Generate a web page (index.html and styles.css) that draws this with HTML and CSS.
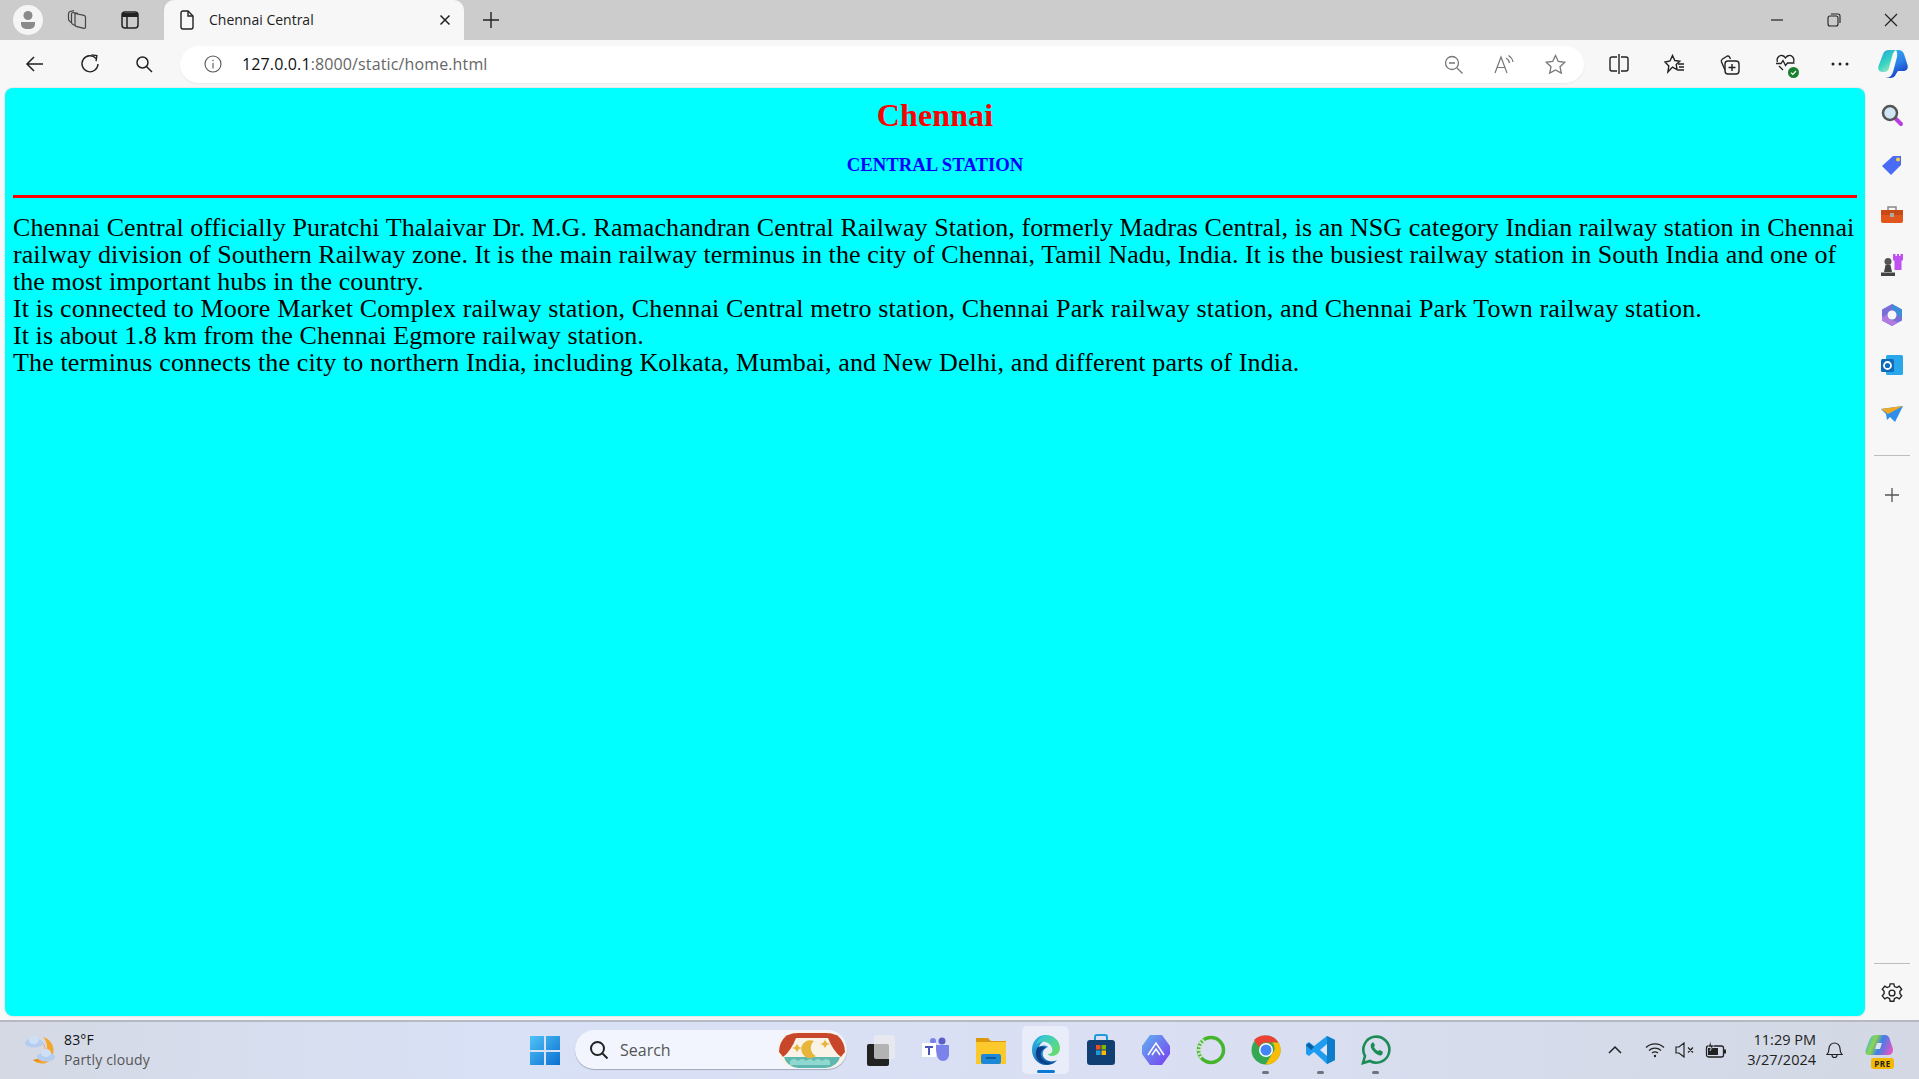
FILE: index.html
```html
<!DOCTYPE html>
<html lang="en">
<head>
<meta charset="utf-8">
<title>Chennai Central</title>
<link rel="stylesheet" href="styles.css">
</head>
<body>
<div class="screen">
  <div class="tabstrip">
    <div class="strip-left">
      <div class="avatar"><svg width="24" height="24" viewBox="0 0 24 24"><circle cx="12" cy="7.500" r="4.500" fill="#8a8a8a"/><path d="M5 14h14v2a5 5 0 0 1-5 5h-4a5 5 0 0 1-5-5z" fill="#8a8a8a"/></svg></div>
      <div class="strip-icon"><svg width="22" height="22" viewBox="0 0 22 22" fill="none" stroke="#444" stroke-width="1.200"><path d="M9 4.500l9 1.800q1.500.4 1.500 2v9.700q0 1.500-1.500 1.300l-7-1.600q-2-.5-2-2z"/><path d="M9 16.500l-2-1q-1.500-.6-1.500-2V5q0-1.500 1.500-1.500l5 .8"/><path d="M5.500 13.500l-1.500-1Q2.500 11.500 2.500 10V5Q2.500 3 4 2.500l4-.8"/></svg></div>
      <div class="strip-icon strip-icon-last"><svg width="18" height="18" viewBox="0 0 18 18" fill="none" stroke="#222" stroke-width="1.500"><rect x="1" y="1" width="16" height="16" rx="3"/><path d="M1 4h16" stroke-width="4"/><path d="M6 5v12"/></svg></div>
    </div>
    <div class="tab">
      <svg width="16" height="20" viewBox="0 0 16 20" fill="none" stroke="#222" stroke-width="1.400"><path d="M2 3a2 2 0 0 1 2-2h5l5 5v11a2 2 0 0 1-2 2H4a2 2 0 0 1-2-2z"/><path d="M9 1v5h5"/></svg>
      <span class="tab-title">Chennai Central</span>
      <svg class="tab-close" width="12" height="12" viewBox="0 0 12 12" stroke="#222" stroke-width="1.500"><path d="M1.500 1.500l9 9M10.500 1.500l-9 9"/></svg>
    </div>
    <svg class="new-tab" width="18" height="18" viewBox="0 0 18 18" stroke="#222" stroke-width="1.400"><path d="M9 1v16M1 9h16"/></svg>
    <div class="win-controls">
      <svg width="14" height="14" viewBox="0 0 14 14" stroke="#222" stroke-width="1.200"><path d="M1 7h12"/></svg>
      <svg width="14" height="14" viewBox="0 0 14 14" fill="none" stroke="#222" stroke-width="1.100"><rect x="1" y="3" width="10" height="10" rx="2"/><path d="M4 1h7a2 2 0 0 1 2 2v7"/></svg>
      <svg width="14" height="14" viewBox="0 0 14 14" stroke="#222" stroke-width="1.200"><path d="M1 1l12 12M13 1L1 13"/></svg>
    </div>
  </div>

  <div class="toolbar">
    <div class="nav">
      <svg width="20" height="20" viewBox="0 0 20 20" fill="none" stroke="#222" stroke-width="1.500"><path d="M18 10H2M9 3l-7 7 7 7"/></svg>
      <svg width="20" height="20" viewBox="0 0 20 20" fill="none" stroke="#222" stroke-width="1.400"><path d="M16 4.500A8 8 0 1 0 18 10"/><path d="M11 1.500h5.500V7" transform="rotate(8 16 4)"/></svg>
      <svg width="18" height="18" viewBox="0 0 18 18" fill="none" stroke="#222" stroke-width="1.500"><circle cx="7.500" cy="7.500" r="5.500"/><path d="M11.500 11.500l5.500 5.500"/></svg>
    </div>
    <div class="address">
      <svg width="18" height="18" viewBox="0 0 18 18" fill="none" stroke="#555" stroke-width="1.100"><circle cx="9" cy="9" r="8"/><path d="M9 8v5.500M9 4.700v1.500"/></svg>
      <span class="url"><span class="url-host">127.0.0.1</span>:8000/static/home.html</span>
      <div class="addr-actions">
        <svg width="19" height="19" viewBox="0 0 19 19" fill="none" stroke="#777" stroke-width="1.300"><circle cx="8" cy="8" r="6.500"/><path d="M5 8h6M13 13l5.500 5.500"/></svg>
        <svg width="20" height="20" viewBox="0 0 20 20" fill="none" stroke="#777" stroke-width="1.200"><path d="M1 19L7 3l6 16M3.500 13.500h7"/><path d="M12 4c2 1 3 3 3.500 5M14.500 1.500c2.500 1.500 4 4 4.500 6.500"/></svg>
        <svg width="21" height="20" viewBox="0 0 21 20" fill="none" stroke="#777" stroke-width="1.300"><path d="M10.500 1.500l2.800 6 6.500.8-4.800 4.400 1.300 6.400-5.800-3.200-5.800 3.200 1.300-6.400L1.200 8.300l6.500-.8z"/></svg>
      </div>
    </div>
    <div class="tools">
      <svg width="20" height="20" viewBox="0 0 20 20" fill="none" stroke="#222" stroke-width="1.400"><path d="M8 3H3a2 2 0 0 0-2 2v10a2 2 0 0 0 2 2h5M12 3h5a2 2 0 0 1 2 2v10a2 2 0 0 1-2 2h-5M10 0v20"/></svg>
      <svg width="21" height="20" viewBox="0 0 21 20" fill="none" stroke="#222" stroke-width="1.400"><path d="M8.500 1.500l2.300 5 5 .7-3.600 3.400.9 5-4.600-2.500L3.900 18l.9-6L1 8l5-1z"/><path d="M14 10h6M15 13h5M14 16h6"/></svg>
      <svg width="21" height="21" viewBox="0 0 21 21" fill="none" stroke="#222" stroke-width="1.400"><path d="M6 16L2.500 8a2.500 2.500 0 0 1 1-3l4-2.500a2 2 0 0 1 3 .5l1 2"/><rect x="6" y="7" width="14" height="13" rx="3"/><path d="M13 10v7M9.500 13.500h7"/></svg>
      <span class="heart">
        <svg width="21" height="21" viewBox="0 0 21 21" fill="none" stroke="#222" stroke-width="1.300"><path d="M2.500 8C1 4.500 4 1 7 1.500c1.500.2 2.800 1.300 3.500 2.500.7-1.200 2-2.300 3.500-2.500 3-.5 6 3 4.500 6.500"/><path d="M1 9.500h5l2-3 2.500 5 2-2.500h7M4 12l4 4"/></svg>
        <svg class="heart-badge" width="11" height="11" viewBox="0 0 11 11"><circle cx="5.500" cy="5.500" r="5.500" fill="#1a7f2e"/><path d="M3 5.700l1.800 1.800L8 4" fill="none" stroke="#fff" stroke-width="1.200"/></svg>
      </span>
      <svg width="20" height="6" viewBox="0 0 20 6" fill="#222"><circle cx="3" cy="3" r="1.500"/><circle cx="10" cy="3" r="1.500"/><circle cx="17" cy="3" r="1.500"/></svg>
      <svg class="copilot" width="30" height="28" viewBox="0 0 30 28"><defs><linearGradient id="cpa" x1="0" y1="0" x2=".6" y2="1"><stop offset="0" stop-color="#1f9fe0"/><stop offset=".6" stop-color="#37d3c0"/><stop offset="1" stop-color="#9be8c8"/></linearGradient><linearGradient id="cpb" x1="0" y1="0" x2=".4" y2="1"><stop offset="0" stop-color="#35b4ea"/><stop offset=".6" stop-color="#2a7fe8"/><stop offset="1" stop-color="#1a3fc8"/></linearGradient></defs><path d="M11 0h7c-2 1-3 3-3.500 5L11 18c-.6 3-3 4-5 4H4c-3 0-4.500-3-3.500-6L5 4c1-2.500 3-4 6-4z" fill="url(#cpa)"/><path d="M18 0h2c3 0 5 1.500 6 4l3.500 11c1 3-.5 6-3.500 6h-6l-2 3c-1 2.500-3 4-6 4H7c5 0 7-3 8-6l4-15c.5-2.500 0-6-1-7z" fill="url(#cpb)"/></svg>
    </div>
  </div>

  <div class="browser-body">
    <main class="page">
      <h1 class="title">Chennai</h1>
      <h3 class="subtitle">CENTRAL STATION</h3>
      <hr class="rule">
      <p class="article">Chennai Central officially Puratchi Thalaivar Dr. M.G. Ramachandran Central Railway Station, formerly Madras Central, is an NSG category Indian railway station in Chennai railway division of Southern Railway zone. It is the main railway terminus in the city of Chennai, Tamil Nadu, India. It is the busiest railway station in South India and one of the most important hubs in the country.<br><span class="wide">It is connected to Moore Market Complex railway station, Chennai Central metro station, Chennai Park railway station, and Chennai Park Town railway station.</span><br>It is about 1.8 km from the Chennai Egmore railway station.<br><span class="wide">The terminus connects the city to northern India, including Kolkata, Mumbai, and New Delhi, and different parts of India.</span></p>
    </main>
    <aside class="sidebar">
      <svg width="24" height="24" viewBox="0 0 24 24"><path d="M14 14l7 7" stroke="#b93ee0" stroke-width="4" stroke-linecap="round"/><circle cx="10" cy="10" r="7" fill="#cfe6f5" stroke="#555" stroke-width="2.500"/></svg>
      <svg width="24" height="24" viewBox="0 0 24 24"><path d="M2 13L13 3h8v9L11 22z" fill="#4a6cf5"/><circle cx="18" cy="6.500" r="2" fill="#f4d03f"/></svg>
      <svg width="24" height="24" viewBox="0 0 24 24"><path d="M8 7V4h8v3" fill="none" stroke="#888" stroke-width="1.500"/><rect x="1" y="7" width="22" height="13" rx="2" fill="#e0561c"/><rect x="1" y="7" width="22" height="5" fill="#c84a12"/><rect x="10" y="10" width="4" height="4" fill="#aaa"/></svg>
      <svg width="24" height="24" viewBox="0 0 24 24"><path d="M13 1h2.500v2H17V1h2v2h1.500V1H23v6l-1.500 1v9h-7V8L13 7z" fill="#c050f0"/><circle cx="8" cy="8.500" r="3.500" fill="#555"/><path d="M5.500 12h5l1.500 7H4zM1 19.500h14V23H1z" fill="#444"/></svg>
      <svg width="24" height="24" viewBox="0 0 24 24"><path d="M12 1l10 5.500v11L12 23 2 17.500v-11z" fill="#7a6fd8"/><path d="M12 1l10 5.500v8L17 12a5 5 0 0 0-5-5z" fill="#3a8fd8"/><path d="M2 14l5-2a5 5 0 0 0 5 5l6 2.500L12 23 2 17.500z" fill="#b07ae0"/><circle cx="12" cy="12" r="4.500" fill="#f7f7f7"/></svg>
      <svg width="24" height="24" viewBox="0 0 24 24"><rect x="6" y="2" width="17" height="20" rx="1.500" fill="#28a8ea"/><rect x="1" y="6" width="13" height="13" rx="1.500" fill="#0f6cbd"/><circle cx="7.500" cy="12.500" r="3.500" fill="none" stroke="#fff" stroke-width="1.800"/></svg>
      <svg width="24" height="24" viewBox="0 0 24 24"><path d="M1 6l22-3-8 16-5-5-3 3-1-6z" fill="#2f8fe8"/><path d="M1 6l22-3-15 8z" fill="#f0a820"/></svg>
      <div class="side-sep"></div>
      <svg class="side-add" width="16" height="16" viewBox="0 0 16 16" stroke="#555" stroke-width="1.300"><path d="M8 1v14M1 8h14"/></svg>
      <div class="side-spacer"></div>
      <div class="side-sep side-sep-end"></div>
      <svg class="side-gear" width="22" height="22" viewBox="0 0 24 24" fill="none" stroke="#222" stroke-width="1.500"><circle cx="12" cy="12" r="3.200"/><path d="M10 2h4l.7 3 2.600 1.100 2.600-1.600 2.700 3.400-2 2.200v2.800l2 2.200-2.700 3.400-2.600-1.600-2.600 1.100-.7 3h-4l-.7-3-2.600-1.100-2.600 1.600-2.700-3.400 2-2.200v-2.800l-2-2.200 2.700-3.400 2.600 1.600L9.300 5z"/></svg>
    </aside>
  </div>

  <footer class="taskbar">
    <div class="weather">
      <svg width="36" height="34" viewBox="0 0 36 34"><path d="M20 4a14 14 0 0 1 3 26 14 14 0 0 1-13-3c8 1 15-5 14-13 0-4-2-8-4-10z" fill="#f4a62a"/><path d="M16 7c6 4 8 11 4 17l-10 3c6 4 13 0 13-8 0-5-3-11-7-12z" fill="#f08a1c"/><ellipse cx="11" cy="10" rx="9" ry="4.500" fill="#b5cdf0"/><ellipse cx="11" cy="7" rx="5" ry="4" fill="#cfdff5"/><ellipse cx="23" cy="24" rx="9" ry="4.500" fill="#b5cdf0"/><ellipse cx="23" cy="20" rx="5" ry="4" fill="#cfdff5"/></svg>
      <div class="weather-text"><span class="temp">83°F</span><span class="cond">Partly cloudy</span></div>
    </div>
    <div class="task-center">
      <svg class="tb-icon" width="30" height="30" viewBox="0 0 30 30"><defs><linearGradient id="win" x1="0" y1="0" x2="1" y2="1"><stop offset="0" stop-color="#4fc3f7"/><stop offset="1" stop-color="#0a6fd0"/></linearGradient></defs><path d="M0 1h14v14H0zM16 1h14v14H16zM0 17h14v13H0zM16 17h14v13H16z" fill="url(#win)"/></svg>
      <div class="search">
        <svg width="20" height="20" viewBox="0 0 20 20" fill="none" stroke="#222" stroke-width="2"><circle cx="8.500" cy="8.500" r="6.500"/><path d="M13 13l5.500 5.500"/></svg>
        <span class="search-text">Search</span>
        <svg class="search-art" width="68" height="36" viewBox="0 0 68 36"><rect width="68" height="36" rx="18" fill="#f8f3e6"/><path d="M10 3Q14 1 20 1h28q6 0 10 2v3H10z" fill="#c8472a"/><path d="M9 3Q1 10 1 20q2 2 4 5 8-6 13-19z" fill="#c8472a"/><path d="M59 3q8 7 8 17-2 2-4 5-8-6-13-19z" fill="#c8472a"/><path d="M6 25h56q-2 9-14 11H20Q8 34 6 25z" fill="#5fb8b0"/><path d="M12 29q4-4 8 0 4-4 8 0 4-4 8 0 4-4 8 0 4-4 8 0v4H12z" fill="#8fd8d0"/><path d="M36 9a9 9 0 1 0 2 15 9 9 0 0 1-2-15z" fill="#e8b53a"/><path d="M19 12l2 3 3 1-3 1-2 3-2-3-3-1 3-1zM47 8l2 3 3 1-3 1-2 3-2-3-3-1 3-1z" fill="#e8b53a"/></svg>
      </div>
      <span class="tb-slot"><svg width="30" height="34" viewBox="0 0 30 34"><rect x="1" y="11" width="22" height="22" rx="2" fill="#222"/><rect x="8" y="2" width="21" height="24" rx="2" fill="#ececec" fill-opacity=".72"/></svg></span>
      <span class="tb-slot"><svg width="30" height="30" viewBox="0 0 30 30"><circle cx="21" cy="6" r="3.500" fill="#5b5fc7"/><circle cx="12" cy="6" r="3" fill="#7b83eb"/><path d="M14 10h14v10a6 6 0 0 1-12 0z" fill="#7b83eb"/><rect x="1" y="8" width="14" height="14" fill="#fff"/><path d="M4 11h8v2H9v7H7v-7H4z" fill="#4b53bc"/></svg></span>
      <span class="tb-slot"><svg width="30" height="28" viewBox="0 0 30 28"><path d="M0 2h12l3 3h15v4H0z" fill="#d99a10"/><rect y="6" width="30" height="22" fill="#fbc92b"/><rect x="5" y="18" width="20" height="10" rx="2" fill="#1e88d8"/><path d="M10 22h10" stroke="#0f4f8a" stroke-width="1.500"/></svg></span>
      <span class="tb-slot tb-active"><svg width="30" height="32" viewBox="0 0 30 32"><defs><linearGradient id="edge" x1="0" y1="0" x2=".6" y2="1"><stop offset="0" stop-color="#35c1f1"/><stop offset="1" stop-color="#0c59a4"/></linearGradient><linearGradient id="edgeg" x1="0" y1="0" x2="1" y2="1"><stop offset="0" stop-color="#2cc4e8"/><stop offset="1" stop-color="#6ee05a"/></linearGradient></defs><path d="M15 1C7 1 1 7 1 16c0 8 6 15 14 15 5 0 9-2 11-5-5 3-12 1-14-4-1-4 1-8 5-9-2-2-6-2-9 0 2-6 8-8 12-7z" fill="url(#edge)"/><path d="M15 1c8 0 14 6 14 13 0 5-4 8-8 8-2 0-4-1-4-2 4 0 5-3 4-6-1-4-6-7-11-6-2 .5-4 2-5 3 2-6 6-10 10-10z" fill="url(#edgeg)"/><path d="M6 14c3-2 7-2 9 0-4 1-6 4-5 8 1 4 5 7 10 7-6 3-16-1-15-11z" fill="#0a3d8a"/></svg><span class="active-bar"></span></span>
      <span class="tb-slot"><svg width="30" height="32" viewBox="0 0 30 32"><path d="M9 7V3a2 2 0 0 1 2-2h8a2 2 0 0 1 2 2v4" fill="none" stroke="#1c9bd8" stroke-width="2"/><rect x="1" y="6" width="28" height="25" rx="3" fill="#123f73"/><rect x="10" y="11" width="4.500" height="4.500" fill="#f25022"/><rect x="15.500" y="11" width="4.500" height="4.500" fill="#7fba00"/><rect x="10" y="16.500" width="4.500" height="4.500" fill="#1c9bd8"/><rect x="15.500" y="16.500" width="4.500" height="4.500" fill="#ffb900"/></svg></span>
      <span class="tb-slot"><svg width="30" height="32" viewBox="0 0 30 32"><defs><linearGradient id="arc" x1="0" y1="0" x2="1" y2="1"><stop offset="0" stop-color="#5fb4f0"/><stop offset="1" stop-color="#7a3cf0"/></linearGradient></defs><path d="M9 1h12l8 11v8l-8 11H9L1 20v-8z" fill="url(#arc)"/><path d="M7 21l8-12 8 12M11 21l4-6 4 6" fill="none" stroke="#fff" stroke-width="1.500"/></svg></span>
      <span class="tb-slot"><svg width="30" height="30" viewBox="0 0 30 30" fill="none"><circle cx="15" cy="15" r="12.500" stroke="#46b52c" stroke-width="3.500"/><path d="M8 5a12.500 12.500 0 0 0-2 18" stroke="#c9e8c0" stroke-width="4" stroke-dasharray="2 1.500"/></svg></span>
      <span class="tb-slot"><svg width="30" height="30" viewBox="0 0 30 30"><circle cx="15" cy="15" r="14.500" fill="#34a853"/><path d="M15 .5a14.500 14.500 0 0 1 12.500 7H15a7.500 7.500 0 0 0-7 5L3 5A14.500 14.500 0 0 1 15 .5z" fill="#ea4335"/><path d="M27.500 7.500a14.500 14.500 0 0 1-13 22L21 19a7.500 7.500 0 0 0 0-11.500z" fill="#fbbc05"/><circle cx="15" cy="15" r="7" fill="#fff"/><circle cx="15" cy="15" r="5.500" fill="#4285f4"/></svg><span class="run-dot"></span></span>
      <span class="tb-slot"><svg width="30" height="30" viewBox="0 0 30 30"><path d="M21 1l8 4v20l-8 4-13-12-5 4-3-2v-10l3-2 5 4z" fill="#1f9cf0"/><path d="M21 9l-7 6 7 6z" fill="#e0e4f6"/><path d="M21 1l8 4v20l-8 4z" fill="#0d7cc9"/><path d="M0 10l3-2 5 4-3 3z" fill="#0a5fa0"/></svg><span class="run-dot"></span></span>
      <span class="tb-slot"><svg width="30" height="30" viewBox="0 0 30 30" fill="none"><path d="M2 28l2-7a13 13 0 1 1 5 5z" stroke="#1b8c55" stroke-width="2.600"/><path d="M10 9c-1 2 0 5 3 8s6 4 8 3l1-3-3-2-2 1c-2-1-3-2-4-4l1-2-2-3z" fill="#1b8c55"/></svg><span class="run-dot"></span></span>
    </div>
    <div class="tray">
      <svg width="14" height="9" viewBox="0 0 14 9" fill="none" stroke="#222" stroke-width="1.500"><path d="M1 8l6-6 6 6"/></svg>
      <div class="tray-status">
        <svg width="20" height="16" viewBox="0 0 20 16" fill="none" stroke="#222" stroke-width="1.300"><path d="M1 5.500a13 13 0 0 1 18 0M4 8.500a9 9 0 0 1 12 0M7 11a5 5 0 0 1 6 0"/><circle cx="10" cy="14" r="1.200" fill="#222" stroke="none"/></svg>
        <svg width="20" height="16" viewBox="0 0 20 16" fill="none" stroke="#222" stroke-width="1.200"><path d="M1 5h3l5-4v14l-5-4H1zM13 5.500l5 5M18 5.500l-5 5"/></svg>
        <svg width="22" height="18" viewBox="0 0 22 18"><rect x="1.500" y="5" width="17" height="11" rx="2" fill="none" stroke="#222" stroke-width="1.300"/><path d="M3 14V7h10v7z" fill="#222"/><rect x="19" y="8.500" width="2" height="4" fill="#222"/><path d="M6 0L3 6h3l-1 4 4-6H6z" fill="#222" stroke="#d5dae6" stroke-width=".6"/></svg>
      </div>
      <div class="clock"><span>11:29 PM</span><span>3/27/2024</span></div>
      <svg class="bell" width="17" height="19" viewBox="0 0 17 19" fill="none" stroke="#222" stroke-width="1.200"><path d="M1 14.500c1.500-1.500 2-3 2-6a5.500 5.500 0 0 1 11 0c0 3 .5 4.500 2 6zM6 15a2.500 2.500 0 0 0 5 0"/></svg>
      <span class="copilot-pre">
        <svg width="28" height="24" viewBox="0 0 28 24"><defs><linearGradient id="cpp" x1="0" y1=".3" x2="1" y2=".6"><stop offset="0" stop-color="#35b8e8"/><stop offset=".3" stop-color="#8fd44a"/><stop offset=".55" stop-color="#3c80e8"/><stop offset="1" stop-color="#e055c8"/></linearGradient></defs><path d="M10 0h10q4 0 5 5l3 9q0 6-5 6H4q-5 0-3-6l3-8q2-6 6-6z" fill="url(#cpp)"/><path d="M12 8h5l-2 6h-5z" fill="#dfe3ee"/></svg>
        <span class="pre-badge">PRE</span>
      </span>
    </div>
  </footer>
</div>
</body>
</html>
```

FILE: styles.css
```css
* { box-sizing: border-box; }
html, body { margin: 0; height: 100%; overflow: hidden; }
.screen {
  width: 1919px; height: 1079px;
  display: flex; flex-direction: column;
  font-family: "Open Sans", "Liberation Sans", sans-serif;
  color: #1a1a1a;
  background: #f7f7f7;
}
svg { flex: none; display: block; }

.tabstrip { height: 40px; background: #cccccc; display: flex; align-items: center; flex: none; }
.strip-left { display: flex; align-items: center; width: 164px; padding-left: 13px; gap: 24px; flex: none; }
.avatar { width: 30px; height: 30px; flex: none; background: #f5f5f5; border-radius: 50%; display: flex; align-items: center; justify-content: center; }
.strip-icon { width: 20px; display: flex; justify-content: center; flex: none; }
.strip-icon-last { margin-left: 9px; }
.tab { width: 300px; height: 40px; flex: none; background: #f7f7f7; border-radius: 10px 10px 0 0; display: flex; align-items: center; padding: 0 13px 0 15px; }
.tab-title { font-size: 14px; margin-left: 14px; margin-bottom: 2px; flex: 1; color: #222; }
.new-tab { margin-left: 18px; }
.win-controls { margin-left: auto; display: flex; gap: 43px; padding-right: 21px; align-items: center; }

.toolbar { height: 48px; flex: none; background: #f7f7f7; display: flex; align-items: center; }
.nav { display: flex; align-items: center; gap: 35px; width: 180px; padding-left: 25px; flex: none; }
.address { width: 1404px; height: 37px; background: #fff; border-radius: 19px; display: flex; align-items: center; padding: 0 18px 0 24px; flex: none; box-shadow: 0 1px 2px rgba(0,0,0,.06); }
.url { margin-left: 20px; font-size: 16px; color: #666; letter-spacing: .13px; }
.url-host { color: #111; }
.addr-actions { margin-left: auto; display: flex; align-items: center; gap: 31px; }
.tools { display: flex; align-items: center; gap: 34.5px; padding-left: 25px; flex: 1; }
.heart { position: relative; width: 21px; height: 21px; display: block; flex: none; }
.heart-badge { position: absolute; right: -3px; bottom: -3px; }
.copilot { margin-left: -7px; }

.browser-body { flex: 1; min-height: 0; display: flex; padding-left: 5px; }
.page { width: 1860px; height: 928px; background: #00ffff; border-radius: 8px; padding: 8px; color: #000; font-family: "Liberation Serif", serif; box-shadow: 0 0 2px rgba(0,0,0,.2); }
.title { margin: 0; height: 40px; line-height: 38px; text-align: center; color: #ff0000; font-size: 32px; letter-spacing: .15px; }
.subtitle { margin: 0; padding-top: 16px; height: 59px; line-height: 26px; text-align: center; color: #0000ff; font-size: 18.72px; }
.rule { margin: 0; height: 3px; border: 0; background: #ff0000; }
.article { margin: 16px 0 0; font-size: 26px; line-height: 27px; letter-spacing: .07px; }
.wide { letter-spacing: .14px; }

.sidebar { width: 54px; flex: none; display: flex; flex-direction: column; align-items: center; padding-top: 15px; gap: 26px; height: 928px; }
.side-sep { width: 36px; height: 1px; background: #bdbdbd; flex: none; margin-top: 2px; }
.side-add { margin-top: 5px; }
.side-spacer { flex: 1; }
.side-sep-end { margin-top: 0; margin-bottom: -7px; }
.side-gear { margin-top: -1px; margin-bottom: 12px; }

.taskbar {
  height: 59px; flex: none; display: flex; align-items: center;
  border-top: 2px solid #b6b9c3;
  background: linear-gradient(90deg, #d4d9e4 0%, #d9e1f6 25%, #dadff3 60%, #d3d8e4 100%);
  padding: 0 24px 2px 23px;
}
.weather { display: flex; align-items: center; gap: 5px; width: 507px; flex: none; }
.weather-text { display: flex; flex-direction: column; font-size: 14px; line-height: 20px; letter-spacing: .15px; }
.temp { color: #111; }
.cond { color: #555; }
.task-center { display: flex; align-items: center; }
.tb-icon { margin-right: 15px; }
.search { width: 272px; height: 39px; border-radius: 20px; background: #f2f5fd; display: flex; align-items: center; padding: 0 1px 0 14px; box-shadow: 0 1px 1px rgba(0,0,0,.25); margin-right: 10px; flex: none; }
.search-text { margin-left: 11px; font-size: 16px; color: #555; flex: 1; }
.tb-slot { width: 47px; height: 48px; margin-right: 8px; display: flex; align-items: center; justify-content: center; position: relative; flex: none; border-radius: 5px; }
.tb-active { background: #e9ecf9; }
.active-bar { position: absolute; left: 15px; bottom: 1px; width: 18px; height: 3px; border-radius: 2px; background: #0b78d4; }
.run-dot { position: absolute; left: 20px; bottom: 0; width: 7px; height: 3px; border-radius: 2px; background: #70737b; }
.tray { margin-left: auto; display: flex; align-items: center; }
.tray-status { display: flex; align-items: center; gap: 10px; margin-left: 23px; }
.clock { display: flex; flex-direction: column; align-items: flex-end; font-size: 14.5px; line-height: 20px; margin-left: 20px; color: #222; }
.bell { margin-left: 10px; }
.copilot-pre { position: relative; width: 30px; height: 30px; display: block; margin-left: 22px; flex: none; }
.pre-badge { position: absolute; left: 6px; bottom: -4px; width: 23px; height: 11px; border-radius: 3px; background: #f5b800; color: #222; font: bold 8px/11px "Open Sans", sans-serif; text-align: center; letter-spacing: .5px; }
```
